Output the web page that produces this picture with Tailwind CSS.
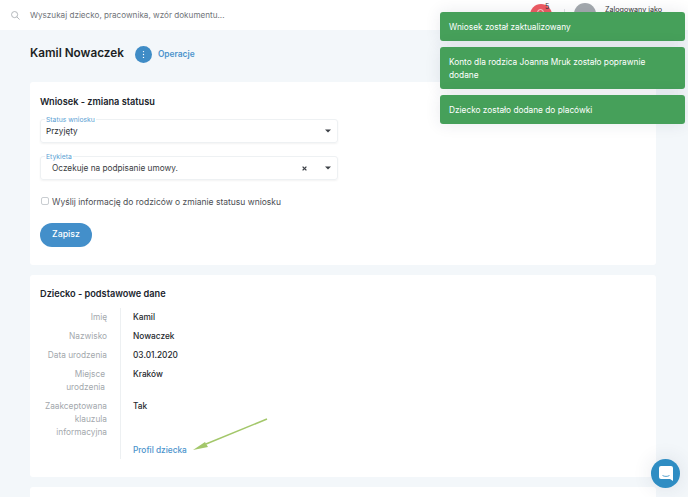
<!doctype html>
<html><head><meta charset="utf-8"><script src="https://cdn.jsdelivr.net/npm/@tailwindcss/browser@4"></script></head>
<body class="font-['Inter','Liberation_Sans',sans-serif] bg-[#f3f7fa] overflow-hidden">
<div class="relative w-[688px] h-[497px] overflow-hidden">
  <header class="h-[30px] bg-white flex items-center pl-[11px] relative">
    <svg class="w-[9px] h-[9px] text-[#a3a8ad] mr-[10px]" viewBox="0 0 10 10" fill="none" stroke="currentColor" stroke-width="0.9"><circle cx="4" cy="4" r="3.4"/><path d="M6.5 6.5 9.5 9.5"/></svg>
    <span class="text-[8.15px] text-[#6f7378]">Wyszukaj dziecko, pracownika, wzór dokumentu...</span>
    <div class="absolute left-[530px] top-[4px] w-[22px] h-[22px] rounded-full bg-[#ee5a62]"></div>
    <div class="absolute left-[537px] top-[9px] w-[7px] h-[7px] rounded-full border border-white/70"></div>
    <span class="absolute left-[545px] top-[2px] text-[7px] leading-[10px] text-[#333]">5</span>
    <div class="absolute left-[564px] top-[9px] w-px h-[6px] bg-[#dfe2e5]"></div>
    <div class="absolute left-[574px] top-[3px] w-[22px] h-[22px] rounded-full bg-[#a4a9ae]"></div>
    <span class="absolute left-[605px] top-[4px] text-[7.2px] leading-[11px] text-[#333]">Zalogowany jako</span>
  </header>
  <main class="pl-[30px] pr-[32px]">
    <div class="flex items-center h-[52px] pb-[4px]">
      <h1 class="text-[11.75px] font-semibold text-[#1c1f24]">Kamil Nowaczek</h1>
      <div class="ml-[11px] w-[17px] h-[17px] rounded-full bg-[#3f8cc6] flex items-center justify-center">
        <svg class="w-[3px] h-[9px]" viewBox="0 0 3 9" fill="#fff"><circle cx="1.5" cy="1.6" r="0.7"/><circle cx="1.5" cy="4.5" r="0.7"/><circle cx="1.5" cy="7.4" r="0.7"/></svg>
      </div>
      <span class="ml-[6px] text-[8.4px] font-semibold text-[#4b93cc]">Operacje</span>
    </div>
    <section class="bg-white rounded-[3px] h-[183px] px-[10px] pt-[13px]">
      <h2 class="text-[9.2px] leading-[13px] font-semibold text-[#20242c]">Wniosek - zmiana statusu</h2>
      <div class="relative mt-[11px] w-[298px] h-[24px] rounded-[3px] border border-[#eef1f3] shadow-[0_1px_2px_rgba(0,0,0,0.05)] flex items-center pl-[5px] pr-[6px] justify-between">
        <span class="absolute left-[4px] -top-[5px] bg-white px-[1px] text-[6.8px] leading-[9px] text-[#5b9fd4]">Status wniosku</span>
        <span class="text-[8.2px] text-[#2a2d31]">Przyjęty</span>
        <svg class="w-[6px] h-[4px]" viewBox="0 0 6 4" fill="#3d4147"><path d="M0 0.4h6L3 3.6z"/></svg>
      </div>
      <div class="relative mt-[13px] w-[298px] h-[24px] rounded-[3px] border border-[#eef1f3] shadow-[0_1px_2px_rgba(0,0,0,0.05)] flex items-center pl-[11px] pr-[6px]">
        <span class="absolute left-[4px] -top-[5px] bg-white px-[1px] text-[6.8px] leading-[9px] text-[#5b9fd4]">Etykieta</span>
        <span class="text-[8.25px] text-[#3a3d42] flex-1">Oczekuje na podpisanie umowy.</span>
        <svg class="w-[5px] h-[5px] mr-[18px]" viewBox="0 0 5 5" stroke="#3d4147" stroke-width="1.3"><path d="M.6.6l3.8 3.8M4.4.6.6 4.4"/></svg>
        <svg class="w-[6px] h-[4px]" viewBox="0 0 6 4" fill="#3d4147"><path d="M0 0.4h6L3 3.6z"/></svg>
      </div>
      <div class="flex items-center mt-[16px] h-[12px]">
        <div class="w-[8px] h-[8px] ml-px rounded-[2px] border border-[#c9cdd1] bg-white -mt-[2px]"></div>
        <span class="ml-[3px] text-[8.5px] text-[#4b4e53]">Wyślij informację do rodziców o zmianie statusu wniosku</span>
      </div>
      <button class="mt-[15px] w-[52px] h-[24px] rounded-full bg-[#438fca] text-white text-[8.75px] font-medium flex items-center justify-center">Zapisz</button>
    </section>
    <section class="relative bg-white rounded-[3px] h-[202px] mt-[10px] px-[10px] pt-[12px]">
      <h2 class="text-[9.2px] leading-[13px] font-semibold text-[#20242c]">Dziecko - podstawowe dane</h2>
      <div class="grid grid-cols-[81px_1fr] mt-[8px] text-[8.3px] leading-[13px]">
        <div class="pr-[13px] pt-[3px] text-right text-[#a3a8ad] border-r border-[#edf0f2] h-[151px]">
          <div class="h-[19px]">Imię</div>
          <div class="h-[19px]">Nazwisko</div>
          <div class="h-[19px]">Data urodzenia</div>
          <div class="h-[32px] px-[2px]">Miejsce<br>urodzenia</div>
          <div>Zaakceptowana<br>klauzula<br>informacyjna</div>
        </div>
        <div class="pl-[12px] pt-[3px] font-medium text-[#26292e]">
          <div class="h-[19px]">Kamil</div>
          <div class="h-[19px]">Nowaczek</div>
          <div class="h-[19px]">03.01.2020</div>
          <div class="h-[32px]">Kraków</div>
          <div class="h-[44px]">Tak</div>
          <div class="text-[#4b93cc]">Profil dziecka</div>
        </div>
      </div>
      <svg class="absolute left-[160px] top-[140px] w-[80px] h-[40px]" viewBox="0 0 80 40" fill="none"><path d="M77 4 16 29" stroke="#a3c76a" stroke-width="1.5"/><path d="M3 35 15 27 18 32z" fill="#a3c76a"/></svg>
    </section>
    <section class="bg-white rounded-[3px] h-[40px] mt-[10px]"></section>
  </main>
  <div class="absolute left-[440px] top-[12px] w-[245px] flex flex-col gap-[6px] text-[8.3px] leading-[13px] text-white">
    <div class="bg-[#46a05a] rounded-[3px] px-[9px] pt-px h-[29px] flex items-center shadow-[0_0_16px_rgba(40,50,80,0.1)]">Wniosek został zaktualizowany</div>
    <div class="bg-[#46a05a] rounded-[3px] px-[9px] pt-px h-[42px] flex items-center shadow-[0_0_16px_rgba(40,50,80,0.1)]">Konto dla rodzica Joanna Mruk zostało poprawnie dodane</div>
    <div class="bg-[#46a05a] rounded-[3px] px-[9px] pt-px h-[29px] flex items-center shadow-[0_0_16px_rgba(40,50,80,0.1)]">Dziecko zostało dodane do placówki</div>
  </div>
  <div class="absolute left-[651px] top-[459px] w-[29px] h-[29px] rounded-full bg-[#2f8dc3] shadow-[0_0_20px_rgba(40,50,80,0.12)] flex items-center justify-center">
    <svg class="w-[14px] h-[15px]" viewBox="0 0 14 15"><path d="M2 0h10a2 2 0 0 1 2 2v13l-3-2H2a2 2 0 0 1-2-2V2a2 2 0 0 1 2-2z" fill="#fff"/><path d="M3.5 9.5c2 1.2 5 1.2 7 0" stroke="#2f8dc3" stroke-width="0.8" fill="none"/></svg>
  </div>
</div>
</body></html>
